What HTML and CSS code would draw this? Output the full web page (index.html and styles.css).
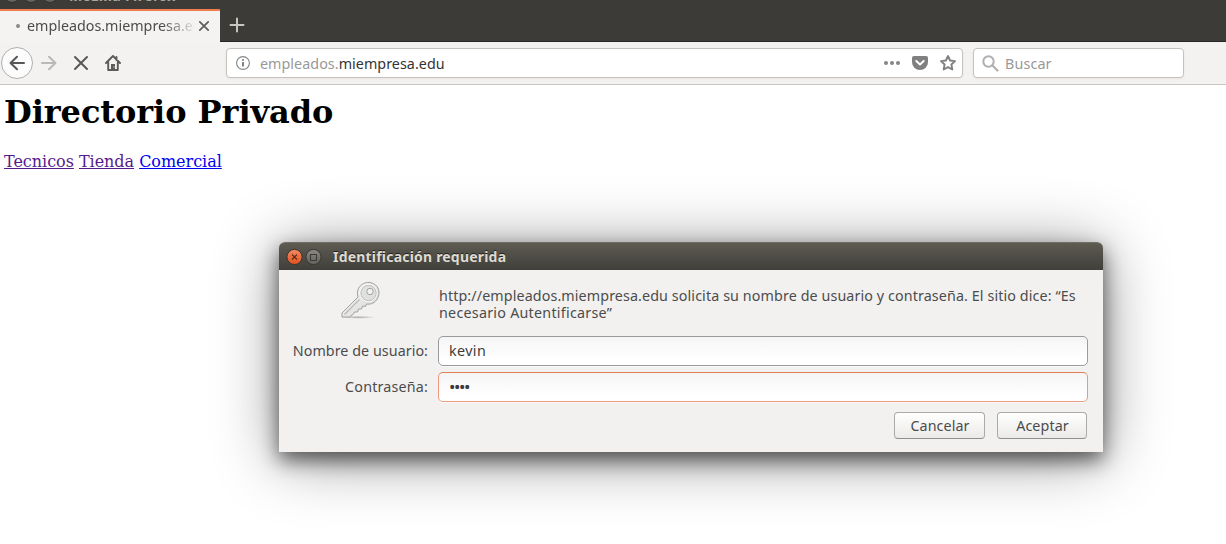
FILE: index.html
```html
<!DOCTYPE html>
<html lang="es">
<head>
<meta charset="utf-8">
<title>Directorio Privado</title>
<link rel="stylesheet" href="styles.css">
</head>
<body>
<header class="browser">
  <div class="titlebar"><i></i><i></i><i></i><span class="window-name">Mozilla Firefox</span></div>
  <div class="tabs">
    <div class="tab">
      <span class="loading"></span>
      <span class="tab-name">empleados.miempresa.edu</span>
      <svg class="tab-close" width="12" height="12" viewBox="0 0 12 12"><path d="M1.8 1.8l8.4 8.4m0-8.4l-8.4 8.4" stroke="#5c5c5c" stroke-width="1.7" stroke-linecap="round"/></svg>
    </div>
    <svg class="new-tab" width="16" height="16" viewBox="0 0 16 16"><path d="M8 1.5v13M1.5 8h13" stroke="#c9c6c0" stroke-width="2" stroke-linecap="round"/></svg>
  </div>
  <nav class="toolbar">
    <div class="back"><svg width="16" height="16" viewBox="0 0 16 16"><path d="M15 8H1.5M8 1.7L1.5 8 8 14.3" fill="none" stroke="#585858" stroke-width="2" stroke-linecap="round" stroke-linejoin="round"/></svg></div>
    <svg class="tool" width="16" height="16" viewBox="0 0 16 16"><path d="M1 8h13.5M8 1.7L14.5 8 8 14.3" fill="none" stroke="#b9b9b8" stroke-width="2" stroke-linecap="round" stroke-linejoin="round"/></svg>
    <svg class="tool" width="16" height="16" viewBox="0 0 16 16"><path d="M2 2l12 12M14 2L2 14" stroke="#585858" stroke-width="2" stroke-linecap="round"/></svg>
    <svg class="tool" width="16" height="16" viewBox="0 0 16 16"><path d="M1 8l7-7 7 7M3.2 7v8h9.6V7M11.5 2v3" fill="none" stroke="#5b5b5b" stroke-width="1.9" stroke-linecap="round" stroke-linejoin="round"/><path d="M6 15V9h4v6z" fill="#5b5b5b"/><path d="M8.5 11.5h1v1h-1z" fill="#eee"/></svg>
    <div class="address">
      <svg width="14" height="14" viewBox="0 0 14 14"><circle cx="7" cy="7" r="6.4" fill="none" stroke="#858585" stroke-width="1.1"/><path d="M7 6v4.5" stroke="#777" stroke-width="1.8"/><circle cx="7" cy="3.9" r="1" fill="#777"/></svg>
      <span class="url"><span class="sub">empleados.</span>miempresa.edu</span>
      <svg class="dots" width="16" height="16" viewBox="0 0 16 16" fill="#858585"><circle cx="2" cy="8" r="2"/><circle cx="8" cy="8" r="2"/><circle cx="14" cy="8" r="2"/></svg>
      <svg class="pocket" width="16" height="16" viewBox="0 0 16 16"><path d="M2 1h12q2 0 2 2v4a8 8 0 0 1-16 0V3q0-2 2-2z" fill="#808080"/><path d="M4.3 6L8 9.5 11.7 6" fill="none" stroke="#fff" stroke-width="2" stroke-linecap="round" stroke-linejoin="round"/></svg>
      <svg class="star" width="16" height="16" viewBox="0 0 16 16"><path d="M8 1l2.1 4.5 4.9.6-3.6 3.4.9 5L8 12.1l-4.3 2.4.9-5L1 6.1l4.9-.6z" fill="none" stroke="#808080" stroke-width="1.9" stroke-linejoin="round"/></svg>
    </div>
    <div class="search">
      <svg width="17" height="17" viewBox="0 0 17 17"><circle cx="6.5" cy="6.5" r="5.2" fill="none" stroke="#b0b0b0" stroke-width="2"/><path d="M10.5 10.5l5 5" stroke="#b0b0b0" stroke-width="2.2" stroke-linecap="round"/></svg>
      <span class="hint">Buscar</span>
    </div>
  </nav>
</header>
<main class="page">
  <h1>Directorio Privado</h1>
  <p><a class="visited" href="#">Tecnicos</a> <a class="visited" href="#">Tienda</a> <a href="#">Comercial</a></p>
</main>
<section class="dialog">
  <div class="dialog-title">
    <svg width="36" height="18" viewBox="0 0 36 18">
      <defs><linearGradient id="r" x2="0" y2="1"><stop stop-color="#f68b64"/><stop offset="1" stop-color="#e0501c"/></linearGradient><linearGradient id="g" x2="0" y2="1"><stop stop-color="#8b8981"/><stop offset="1" stop-color="#62615a"/></linearGradient></defs>
      <circle cx="8.5" cy="9" r="7.6" fill="url(#r)" stroke="#36352f"/><path d="M6 6.5l5 5m0-5l-5 5" stroke="#5a2a18" stroke-width="1.1"/>
      <circle cx="27.5" cy="9" r="7.6" fill="url(#g)" stroke="#36352f"/><path d="M24.5 6.5h6v6h-6z" fill="none" stroke="#3c3b37" stroke-width="1.1"/>
    </svg>
    <span class="dialog-name">Identificación requerida</span>
  </div>
  <div class="message">
    <svg class="key" width="44" height="40" viewBox="0 0 44 40">
      <defs><linearGradient id="k" x2="1" y2="1"><stop stop-color="#fff"/><stop offset="1" stop-color="#d0d1ce"/></linearGradient><radialGradient id="s"><stop stop-color="#aaa"/><stop offset="1" stop-color="#aaa" stop-opacity="0"/></radialGradient></defs>
      <ellipse cx="18" cy="37.3" rx="18" ry="1.5" fill="url(#s)"/>
      <path d="M18 17C15 8 23 1.500 30 2.500c9 1.500 11.500 11 6.500 17.500-3 4-7 4.500-10 4l-1 2.500-3-.5-1 3-3 0-1 3-3 0-1 2-4 3H2v-4z" fill="url(#k)" stroke="#a0a29d" stroke-width="1" stroke-linejoin="round"/>
      <circle cx="28.500" cy="13" r="8.500" fill="#e0e1de" stroke="#fff"/>
      <circle cx="28.500" cy="13" r="7.700" fill="#e0e1de" stroke="#b4b5b1" stroke-width=".8"/>
      <circle cx="30" cy="11.500" r="3.200" fill="#f2f1f0" stroke="#a0a29d"/>
      <path d="M4.500 34.500l15-15" stroke="#b8b9b6" stroke-width="1.2"/>
    </svg>
    <p class="prompt"><span class="line1">http://empleados.miempresa.edu solicita su nombre de usuario y contraseña. El sitio dice: “Es</span><br><span class="line2">necesario Autentificarse”</span></p>
  </div>
  <div class="field"><label class="user-label">Nombre de usuario:</label><div class="input"><span class="user">kevin</span></div></div>
  <div class="field"><label class="pass-label">Contraseña:</label><div class="input focused"><span class="mask">••••</span></div></div>
  <div class="actions"><button class="cancel">Cancelar</button><button class="accept">Aceptar</button></div>
</section>
</body>
</html>
```

FILE: styles.css
```css
* { box-sizing: border-box; }
body { margin: 0; height: 544px; overflow: hidden; background: #fff; font: 14.3px "Noto Sans", sans-serif; color: #4c4c4c; }
svg { display: block; flex: none; }
span, label { white-space: nowrap; }
.browser { height: 85px; background: #3c3b37; }
.titlebar { display: flex; height: 9px; padding-left: 4px; gap: 3px; overflow: hidden; }
.titlebar i { width: 16px; height: 16px; flex: none; margin-top: -13px; border-radius: 50%; background: #66645e; border: 1px solid #302f2b; }
.window-name { margin: -14px 0 0 8px; font-weight: bold; color: #aaa79f; line-height: 20px; font-size: 14px; letter-spacing: .35px; }
.tabs { display: flex; height: 33px; align-items: center; border-bottom: 1px solid #272623; }
.tab { display: flex; align-items: center; width: 220px; height: 33px; flex: none; background: #f4f3f2; border-top: 2px solid #f27c4d; padding: 0 10px 0 16px; }
.loading { width: 4px; height: 4px; margin-right: 1px; border-radius: 50%; background: #898989; }
.tab-name { margin-left: 6px; width: 167px; overflow: hidden; line-height: 20px; -webkit-mask-image: linear-gradient(to right, #000 135px, transparent 170px); mask-image: linear-gradient(to right, #000 135px, transparent 170px); }
.tab-close { margin-left: 4px; }
.new-tab { margin-left: 9px; }
.toolbar { display: flex; height: 43px; align-items: center; background: #f3f2f0; border-bottom: 1px solid #c9c6c2; }
.back { width: 32px; height: 32px; margin: 0 8px 0 1px; display: grid; place-items: center; border: 1px solid #b0afad; border-radius: 50%; background: #fcfcfc; }
.tool { margin-right: 16px; }
.address, .search { display: flex; align-items: center; height: 30px; background: #fff; border: 1px solid #c5c2be; border-radius: 4px; box-shadow: 0 1px 3px #0000000d; }
.address { width: 737px; margin-left: 89px; padding: 0 6px 0 9px; }
.url { margin-left: 10px; color: #333; letter-spacing: .05px; }
.sub { color: #999; }
.dots { margin-left: auto; }
.pocket { margin-left: 12px; }
.star { margin-left: 12px; }
.search { width: 211px; margin-left: 10px; padding-left: 8px; }
.hint { margin-left: 6px; color: #999; letter-spacing: .15px; }
.page { padding: 9px 4px; font-family: "DejaVu Serif", serif; color: #000; }
.page h1 { margin: 0 0 21px; font-size: 32px; line-height: 37px; letter-spacing: -.06px; }
.page p { margin: 0; font-size: 16px; line-height: 19px; letter-spacing: -.03px; }
.page a { color: #00e; }
.page .visited { color: #551a8b; }
.dialog { position: absolute; left: 279px; top: 242px; width: 824px; height: 210px; background: #f2f1f0; border-radius: 6px 6px 0 0; box-shadow: 0 8px 20px #00000094, 0 6px 64px #00000070; }
.dialog-title { height: 28px; display: flex; align-items: center; padding-left: 7px; background: linear-gradient(#5d5b52, #403f3a); border-radius: 6px 6px 0 0; border-top: 1px solid #706e65; }
.dialog-name { margin-left: 11px; font-size: 14px; font-weight: bold; letter-spacing: .2px; color: #dfdbd2; text-shadow: 0 -1px #22211e; }
.message { display: flex; height: 66px; padding: 10px 0 0 61px; }
.prompt { margin: 7px 0 0 55px; line-height: 17px; }
.line1 { letter-spacing: .105px; }
.line2 { letter-spacing: .25px; }
.field { display: flex; align-items: center; height: 30px; margin-bottom: 6px; }
.field label { width: 149px; padding-bottom: 2px; text-align: right; letter-spacing: .05px; }
.field .pass-label { letter-spacing: .18px; }
.input { width: 650px; height: 30px; margin-left: 10px; padding: 0 0 2px 10px; border: 1px solid #999b9c; border-radius: 5px; background: linear-gradient(#f5f5f5, #fff 80%); color: #3c3c3c; display: flex; align-items: center; box-shadow: 0 1px #fafafa; }
.user { letter-spacing: .4px; }
.mask { font-size: 17px; letter-spacing: -1.4px; }
.focused { border-color: #e18055 #eb987c #eb9b80; }
.actions { display: flex; justify-content: flex-end; gap: 12px; padding: 4px 16px 0 0; }
.actions button { height: 27px; padding: 0 0 0 1px; border: 1px solid #acaaa7; border-bottom-color: #8f8e8b; border-radius: 4px; background: linear-gradient(#fff, #ebeae8); color: #4c4c4c; font: inherit; letter-spacing: .1px; }
.cancel { width: 91px; }
.accept { width: 90px; }
```
